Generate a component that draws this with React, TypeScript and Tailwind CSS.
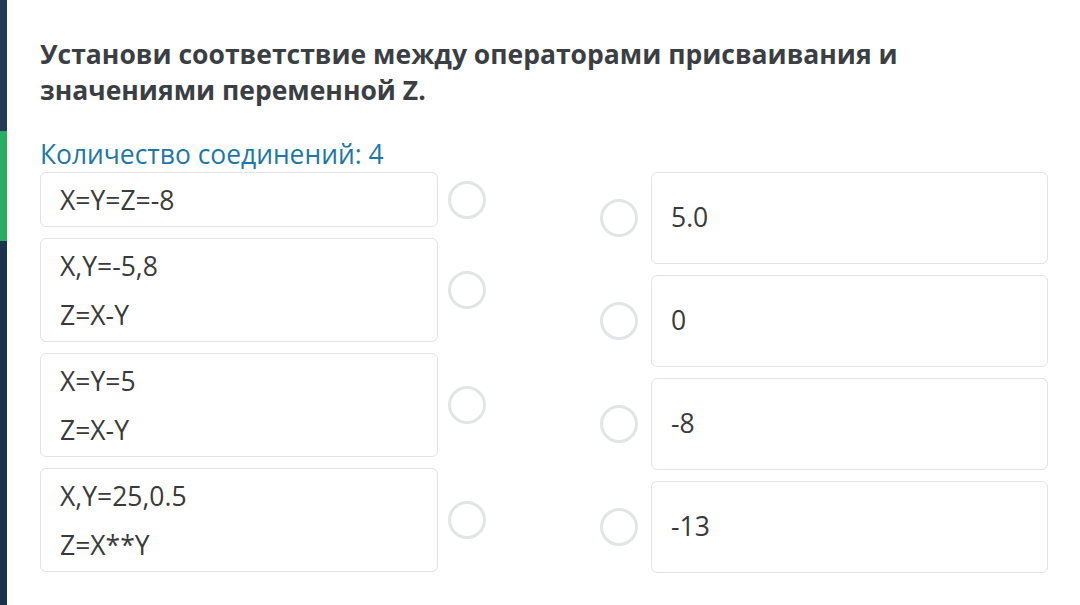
import React from 'react';

const leftItems: string[][] = [
  ['X=Y=Z=-8'],
  ['X,Y=-5,8', 'Z=X-Y'],
  ['X=Y=5', 'Z=X-Y'],
  ['X,Y=25,0.5', 'Z=X**Y'],
];

const rightItems = ['5.0', '0', '-8', '-13'];

const Dot: React.FC = () => (
  <div className="h-[38px] w-[38px] shrink-0 rounded-full border-[3px] border-[#e2e5e6] bg-white" />
);

const App: React.FC = () => {
  return (
    <div
      className="relative h-[605px] w-[1080px] overflow-hidden bg-white text-[#3a3a3a]"
      style={{ fontFamily: '"Open Sans", "Liberation Sans", sans-serif' }}
    >
      {/* left edge stripe */}
      <div className="absolute left-0 top-0 flex h-full w-[7px] flex-col">
        <div className="h-[131px] bg-[#243a56]" />
        <div className="h-[110px] bg-[#27ae60]" />
        <div className="flex-1 bg-[#1c3350]" />
      </div>

      <div className="pl-[40px] pt-[36px]">
        <h1 className="text-[26.5px] font-bold leading-[36px] text-[#3b3f44]">
          Установи соответствие между операторами присваивания и
          <br />
          значениями переменной Z.
        </h1>

        <div className="mt-[30px] text-[26.4px] leading-[32px] text-[#1d78a6]">
          Количество соединений: 4
        </div>

        <div className="mt-[2px] flex items-start">
          {/* left column */}
          <div className="flex flex-col gap-[11px]">
            {leftItems.map((lines, i) => (
              <div key={i} className="flex items-center">
                <div className="w-[398px] rounded-[6px] border border-[#e3e3e3] pb-[1px] pl-[19px] pt-[3px] text-[26.5px] leading-[49px]">
                  {lines.map((l, j) => (
                    <p key={j}>{l}</p>
                  ))}
                </div>
                <div className="ml-[10px]">
                  <Dot />
                </div>
              </div>
            ))}
          </div>

          {/* right column */}
          <div className="ml-[114px] flex flex-col gap-[11px]">
            {rightItems.map((v, i) => (
              <div key={i} className="flex items-center">
                <Dot />
                <div className="ml-[13px] flex h-[92px] w-[397px] items-center rounded-[6px] border border-[#e3e3e3] pl-[19px] text-[26.5px]">
                  {v}
                </div>
              </div>
            ))}
          </div>
        </div>
      </div>
    </div>
  );
};

export default App;
